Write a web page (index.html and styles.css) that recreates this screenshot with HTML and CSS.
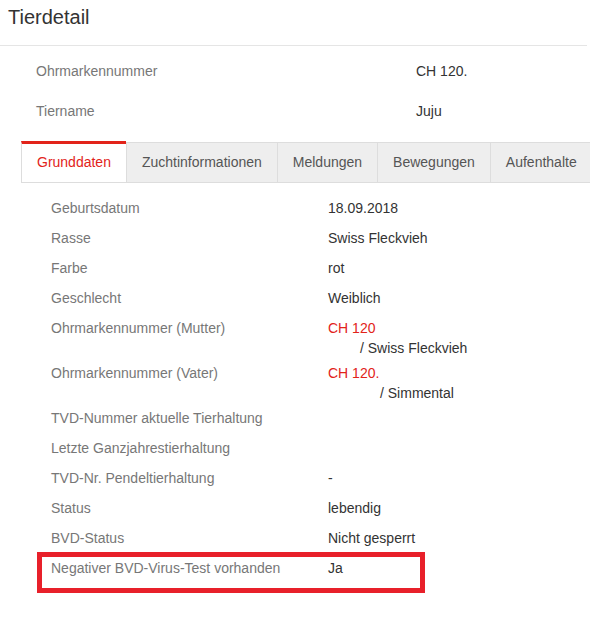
FILE: index.html
```html
<!DOCTYPE html>
<html lang="de">
<head>
  <meta charset="UTF-8" />
  <title>Tierdetail</title>
  <link rel="stylesheet" href="styles.css">
</head>
<body>
  <h1 class="page-title">Tierdetail</h1>

  <!-- Kopfdaten -->
  <div class="head-info">
    <div class="head-row">
      <div class="head-label">Ohrmarkennummer</div>
      <div class="head-value">CH 120.</div>
    </div>
    <div class="head-row">
      <div class="head-label">Tiername</div>
      <div class="head-value">Juju</div>
    </div>
  </div>

  <!-- Tabs -->
  <div class="detail-box">
    <ul class="tabs">
      <li class="tab active">Grunddaten</li>
      <li class="tab">Zuchtinformationen</li>
      <li class="tab">Meldungen</li>
      <li class="tab">Bewegungen</li>
      <li class="tab">Aufenthalte</li>
    </ul>

    <div class="tab-content">
      <div class="row">
        <div class="label">Geburtsdatum</div>
        <div class="value">18.09.2018</div>
      </div>
      <div class="row">
        <div class="label">Rasse</div>
        <div class="value">Swiss Fleckvieh</div>
      </div>
      <div class="row">
        <div class="label">Farbe</div>
        <div class="value">rot</div>
      </div>
      <div class="row">
        <div class="label">Geschlecht</div>
        <div class="value">Weiblich</div>
      </div>
      <div class="row row-multi">
        <div class="label">Ohrmarkennummer (Mutter)</div>
        <div class="value">
          <a class="link">CH 120</a>
          <div class="sub sub-mutter">/ Swiss Fleckvieh</div>
        </div>
      </div>
      <div class="row row-multi">
        <div class="label">Ohrmarkennummer (Vater)</div>
        <div class="value">
          <a class="link">CH 120.</a>
          <div class="sub sub-vater">/ Simmental</div>
        </div>
      </div>
      <div class="row">
        <div class="label">TVD-Nummer aktuelle Tierhaltung</div>
        <div class="value"></div>
      </div>
      <div class="row">
        <div class="label">Letzte Ganzjahrestierhaltung</div>
        <div class="value"></div>
      </div>
      <div class="row">
        <div class="label">TVD-Nr. Pendeltierhaltung</div>
        <div class="value">-</div>
      </div>
      <div class="row">
        <div class="label">Status</div>
        <div class="value">lebendig</div>
      </div>
      <div class="row">
        <div class="label">BVD-Status</div>
        <div class="value">Nicht gesperrt</div>
      </div>
      <div class="row marked">
        <div class="label">Negativer BVD-Virus-Test vorhanden</div>
        <div class="value">Ja</div>
        <div class="highlight"></div>
      </div>
    </div>
  </div>
</body>
</html>
```

FILE: styles.css
```css
body {
  margin: 0;
  padding-bottom: 34px;
  font-family: "Liberation Sans", Arial, sans-serif;
  font-size: 14px;
  color: #333;
  background-color: #fff;
}
.page-title {
  margin: 0 3px 0 0;
  padding: 5px 8px 0;
  height: 40px;
  font-size: 20px;
  font-weight: normal;
  line-height: 24px;
  color: #333;
  border-bottom: 1px solid #e5e5e5;
}
.head-info {
  padding: 5px 0 10px 36px;
}
.head-row {
  display: flex;
  height: 40px;
  align-items: center;
}
.head-label {
  width: 380px;
  color: #777;
}
.head-value {
  color: #333;
}
.detail-box {
  margin-left: 21px;
}
.tabs {
  display: flex;
  align-items: flex-end;
  list-style: none;
  margin: 0;
  padding: 0;
  border-bottom: 1px solid #ddd;
  white-space: nowrap;
  overflow: hidden;
}
.tab {
  margin-bottom: -1px;
  padding: 9px 15px 10px;
  line-height: 20px;
  color: #555;
  background-color: #eee;
  border: 1px solid #ddd;
  border-right: none;
}
.tab.active {
  padding-top: 8px;
  color: #e2231a;
  background-color: #fff;
  border-top: 3px solid #e2231a;
  border-bottom-color: #fff;
}
.tab-content {
  padding-top: 10px;
}
.row {
  display: flex;
  padding: 5px 0 5px 30px;
  line-height: 20px;
}
.row-multi {
  padding-bottom: 0;
}
.label {
  width: 277px;
  color: #777;
}
.value {
  color: #333;
}
.link {
  color: #e2231a;
  text-decoration: none;
}
.sub-mutter {
  margin-left: 32px;
}
.sub-vater {
  margin-left: 52px;
}
.marked {
  position: relative;
}
.highlight {
  position: absolute;
  left: 16px;
  top: -1px;
  width: 378px;
  height: 31px;
  border: 5px solid #e8202a;
}
```
